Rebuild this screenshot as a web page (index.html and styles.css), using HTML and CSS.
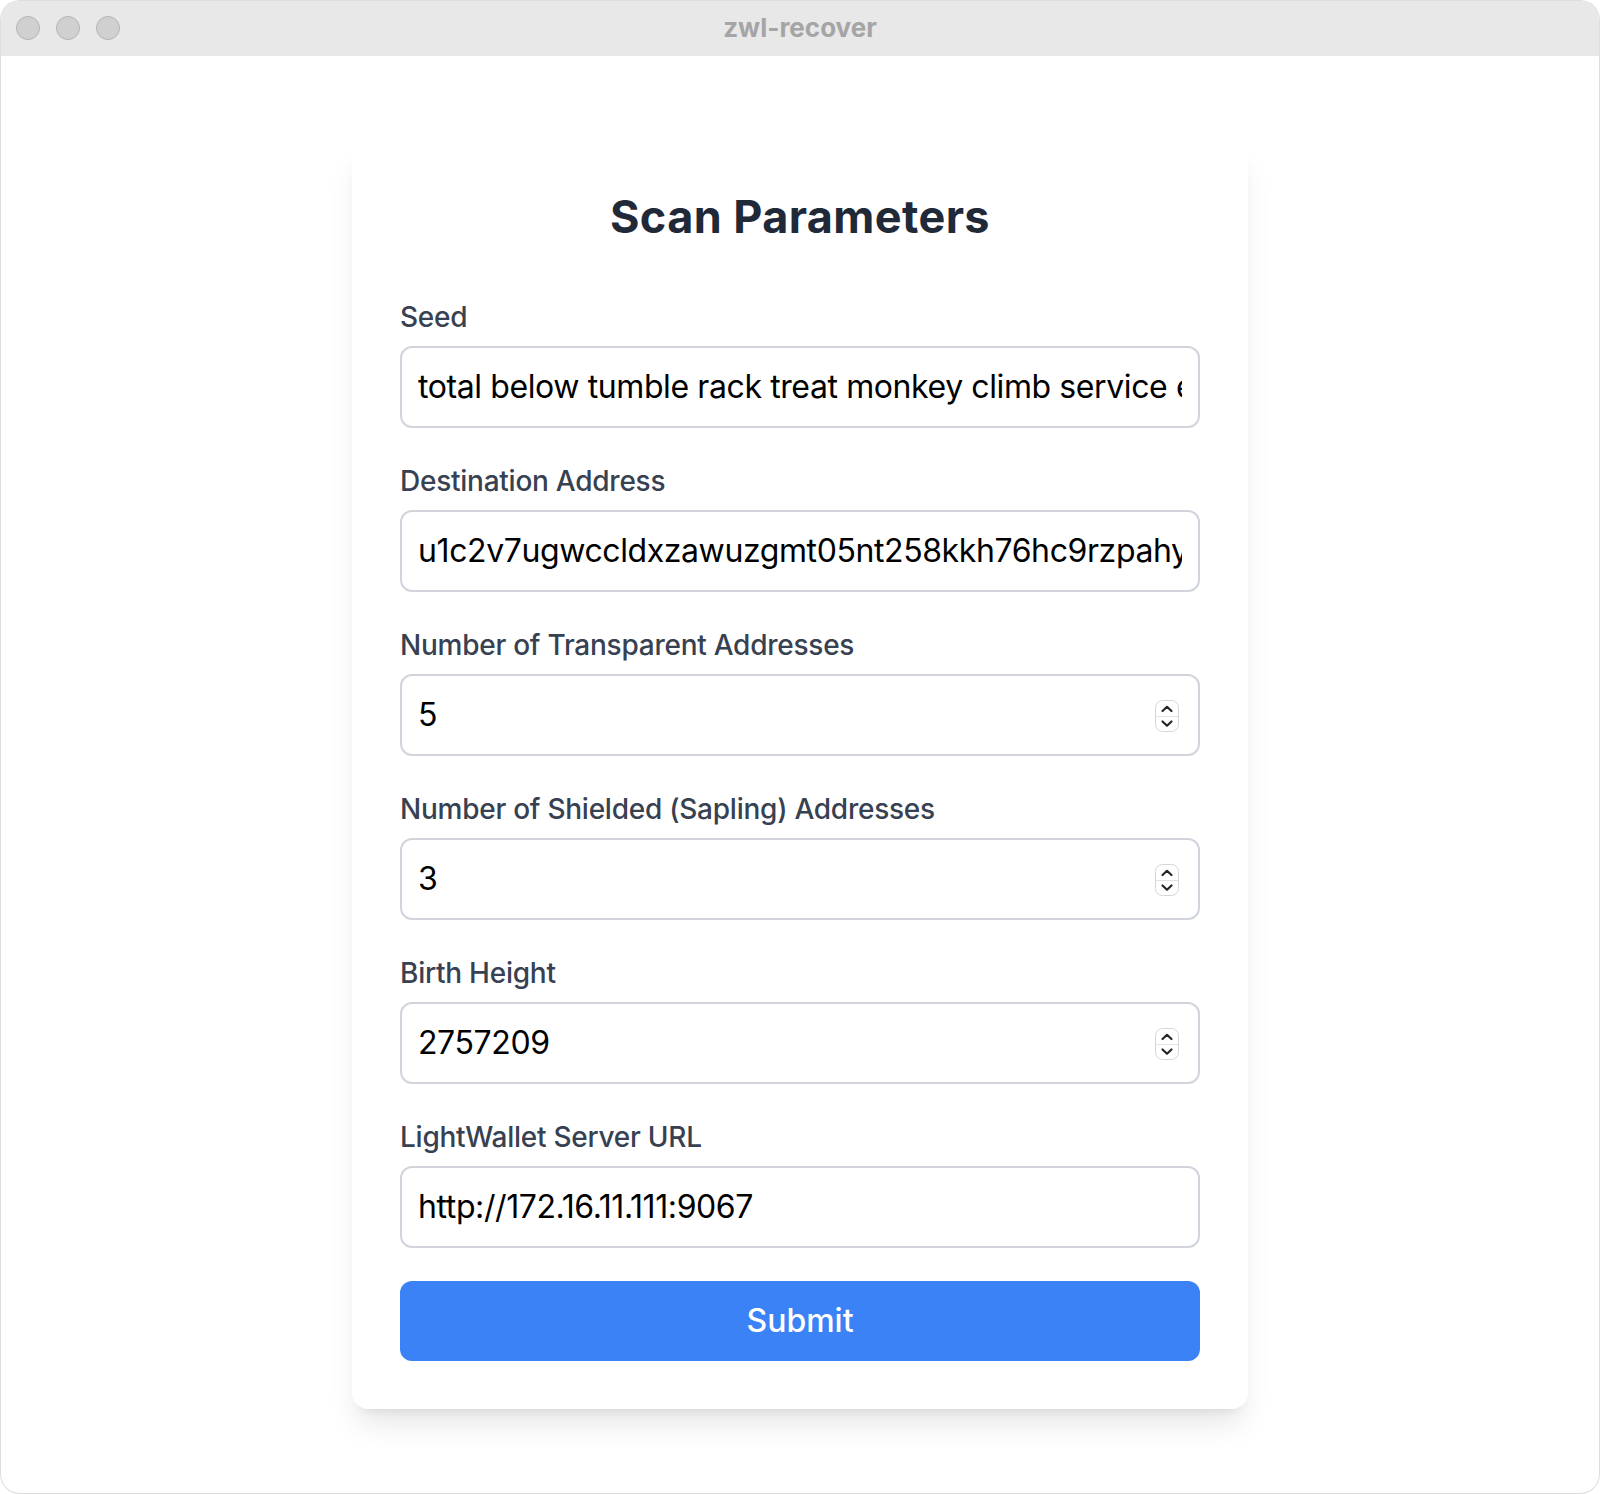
FILE: index.html
```html
<!DOCTYPE html>
<html lang="en">
<head>
<meta charset="utf-8">
<title>zwl-recover</title>
<link rel="stylesheet" href="styles.css">
</head>
<body>
<div class="window">
  <header class="titlebar">
    <div class="lights">
      <span class="light"></span>
      <span class="light"></span>
      <span class="light"></span>
    </div>
    <div class="wtitle">zwl-recover</div>
  </header>
  <main class="content">
    <form class="card">
      <h1 class="heading">Scan Parameters</h1>
      <div class="field">
        <label class="label" for="seed">Seed</label>
        <input class="input" id="seed" type="text" value="total below tumble rack treat monkey climb service exact orbit ramp diet hollow">
      </div>
      <div class="field">
        <label class="label" for="dest">Destination Address</label>
        <input class="input" id="dest" type="text" value="u1c2v7ugwccldxzawuzgmt05nt258kkh76hc9rzpahyyq4m8e2xk0s7">
      </div>
      <div class="field">
        <label class="label" for="taddr">Number of Transparent Addresses</label>
        <div class="numwrap">
          <input class="input" id="taddr" type="number" value="5">
          <svg class="stepper" width="24" height="32" viewBox="0 0 24 32"><rect x="0.5" y="0.5" width="23" height="31" rx="7" fill="#fff" stroke="#d6d6d6"/><line x1="1" y1="16.5" x2="23" y2="16.5" stroke="#e2e2e2"/><path d="M7.5 11 L12 6.8 L16.5 11" fill="none" stroke="#262626" stroke-width="2.2" stroke-linecap="round" stroke-linejoin="round"/><path d="M7.5 21.5 L12 25.7 L16.5 21.5" fill="none" stroke="#262626" stroke-width="2.2" stroke-linecap="round" stroke-linejoin="round"/></svg>
        </div>
      </div>
      <div class="field">
        <label class="label" for="zaddr">Number of Shielded (Sapling) Addresses</label>
        <div class="numwrap">
          <input class="input" id="zaddr" type="number" value="3">
          <svg class="stepper" width="24" height="32" viewBox="0 0 24 32"><rect x="0.5" y="0.5" width="23" height="31" rx="7" fill="#fff" stroke="#d6d6d6"/><line x1="1" y1="16.5" x2="23" y2="16.5" stroke="#e2e2e2"/><path d="M7.5 11 L12 6.8 L16.5 11" fill="none" stroke="#262626" stroke-width="2.2" stroke-linecap="round" stroke-linejoin="round"/><path d="M7.5 21.5 L12 25.7 L16.5 21.5" fill="none" stroke="#262626" stroke-width="2.2" stroke-linecap="round" stroke-linejoin="round"/></svg>
        </div>
      </div>
      <div class="field">
        <label class="label" for="birth">Birth Height</label>
        <div class="numwrap">
          <input class="input" id="birth" type="number" value="2757209">
          <svg class="stepper" width="24" height="32" viewBox="0 0 24 32"><rect x="0.5" y="0.5" width="23" height="31" rx="7" fill="#fff" stroke="#d6d6d6"/><line x1="1" y1="16.5" x2="23" y2="16.5" stroke="#e2e2e2"/><path d="M7.5 11 L12 6.8 L16.5 11" fill="none" stroke="#262626" stroke-width="2.2" stroke-linecap="round" stroke-linejoin="round"/><path d="M7.5 21.5 L12 25.7 L16.5 21.5" fill="none" stroke="#262626" stroke-width="2.2" stroke-linecap="round" stroke-linejoin="round"/></svg>
        </div>
      </div>
      <div class="field">
        <label class="label" for="url">LightWallet Server URL</label>
        <input class="input" id="url" type="text" value="http://172.16.11.111:9067">
      </div>
      <button class="submit" type="button">Submit</button>
    </form>
  </main>
</div>
</body>
</html>
```
FILE: styles.css
```css
* { box-sizing: border-box; }
html, body { margin: 0; padding: 0; background: #fff; }
body { font-family: Inter, "Noto Sans", sans-serif; }

.window {
  width: 1600px;
  height: 1494px;
  border: 1px solid rgba(0,0,0,0.13);
  border-radius: 20px;
  overflow: hidden;
  display: flex;
  flex-direction: column;
  background: #fff;
}

.titlebar {
  height: 55px;
  flex: none;
  background: #e8e8e8;
  display: flex;
  align-items: center;
  padding-bottom: 2px;
  position: relative;
}
.lights { display: flex; gap: 16px; padding-left: 15px; }
.light {
  width: 24px; height: 24px; border-radius: 50%;
  background: #d0d0d0;
  border: 1px solid #b3b3b3;
}
.wtitle {
  position: absolute; left: 0; right: 0; top: 0; bottom: 3px;
  display: flex; align-items: center; justify-content: center;
  font-size: 26px; font-weight: 700; color: #a5a5a5;
}

.content {
  flex: 1;
  display: flex;
  align-items: center;
  justify-content: center;
}

.card {
  width: 896px;
  padding: 48px;
  background: #fff;
  border-radius: 16px;
  box-shadow: 0 20px 30px -6px rgba(0,0,0,0.1), 0 8px 12px -8px rgba(0,0,0,0.1);
  display: flex;
  flex-direction: column;
}

.heading {
  margin: 0 0 52px;
  font-size: 45px;
  line-height: 56px;
  font-weight: 700;
  letter-spacing: 0.4px;
  color: #1f2937;
  text-align: center;
}

.field { display: flex; flex-direction: column; margin-bottom: 33px; }
.label {
  font-size: 28px;
  line-height: 40px;
  font-weight: 500;
  letter-spacing: -0.25px;
  color: #374151;
  margin-bottom: 9px;
}
.input {
  width: 100%;
  height: 82px;
  border: 2px solid #d1d5db;
  border-radius: 12px;
  padding: 16px 16px;
  font-family: Inter, "Noto Sans", sans-serif;
  font-size: 32px;
  line-height: 46px;
  letter-spacing: -0.4px;
  color: #000;
  background: #fff;
  outline: none;
  -moz-appearance: textfield;
}
.input::-webkit-inner-spin-button,
.input::-webkit-outer-spin-button { -webkit-appearance: none; margin: 0; }

.numwrap { position: relative; }
.stepper { position: absolute; right: 21px; top: 26px; }

.submit {
  height: 80px;
  border: none;
  border-radius: 12px;
  background: #3b82f6;
  color: #fff;
  font-family: Inter, "Noto Sans", sans-serif;
  font-size: 32px;
  line-height: 48px;
  font-weight: 500;
  padding: 16px;
}
```
